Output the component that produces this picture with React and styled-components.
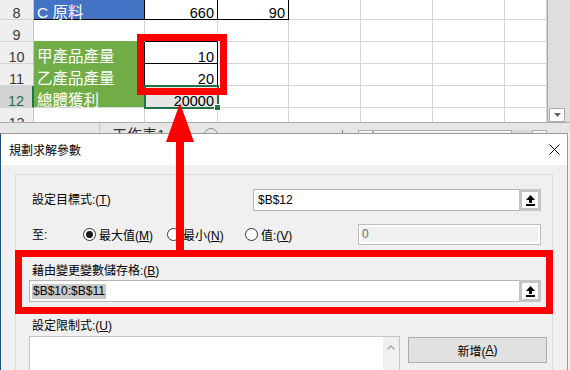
import React from "react";
import styled, { createGlobalStyle } from "styled-components";

const GlobalStyle = createGlobalStyle`
  html, body { margin: 0; padding: 0; }
  body {
    width: 570px;
    height: 370px;
    overflow: hidden;
    background: #f0f0f0;
    font-family: "Liberation Sans", "Noto Sans CJK TC", sans-serif;
  }
`;

const Page = styled.div`
  position: relative;
  width: 570px;
  height: 370px;
  overflow: hidden;
`;

/* ---------- spreadsheet behind the dialog ---------- */

const Sheet = styled.div`
  height: 133px;
  display: flex;
  flex-direction: column;
  background: #fff;
`;

const SheetMain = styled.div`
  display: flex;
  height: 122px;
`;

const Grid = styled.div`
  width: 547px;
  height: 122px;
  overflow: hidden;
  display: grid;
  grid-template-columns: 34px 111px 73px 71px 72px 72px 72px 42px;
  grid-template-rows: 20px repeat(5, 22px);
  font-size: 14.5px;
`;

const RowHead = styled.div`
  box-sizing: border-box;
  display: flex;
  align-items: flex-end;
  justify-content: center;
  line-height: 12px;
  background: ${(p) => (p.$active ? "#d2d2d2" : "#efefef")};
  color: ${(p) => (p.$active ? "#217346" : "#3a3a3a")};
  border-right: ${(p) => (p.$active ? "2px solid #217346" : "1px solid #c6c6c6")};
  border-bottom: 1px solid #d4d4d4;
`;

const Cell = styled.div`
  position: relative;
  box-sizing: border-box;
  display: flex;
  align-items: flex-end;
  justify-content: ${(p) => (p.$align === "right" ? "flex-end" : "flex-start")};
  padding: 0 3px;
  line-height: 12px;
  white-space: nowrap;
  font-size: ${(p) => (p.$big ? "15.5px" : "14.5px")};
  background: ${(p) => p.$bg || "#fff"};
  color: ${(p) => p.$color || "#000"};
  border-right: 1px solid ${(p) => p.$r || "#d4d4d4"};
  border-bottom: 1px solid ${(p) => p.$b || "#d4d4d4"};
`;

const SelCell = styled(Cell)`
  z-index: 1;
  &::after {
    content: "";
    position: absolute;
    left: -1px;
    top: -1px;
    right: -2px;
    bottom: -2px;
    border: 2px solid #217346;
  }
  &::before {
    content: "";
    position: absolute;
    right: -4px;
    bottom: -4px;
    width: 5px;
    height: 5px;
    background: #217346;
    border: 1px solid #fff;
    z-index: 2;
  }
`;

const VScroll = styled.div`
  flex: 1;
  display: flex;
  flex-direction: column;
  background: #dedede;
  border-left: 1px solid #ababab;
  padding-left: 1px;
`;

const DownBtn = styled.div`
  margin-top: auto;
  width: 16px;
  height: 14px;
  box-sizing: border-box;
  border: 1px solid #ababab;
  background: #fff;
  display: flex;
  align-items: center;
  justify-content: center;
`;

const TabStrip = styled.div`
  height: 11px;
  box-sizing: border-box;
  border-top: 1px solid #ababab;
  background: #e6e6e6;
  display: flex;
  align-items: flex-start;
  overflow: hidden;
`;

const TabNav = styled.div`
  width: 100px;
  height: 20px;
  box-sizing: border-box;
  border-right: 1px solid #c6c6c6;
`;

const SheetTab = styled.div`
  width: 104px;
  box-sizing: border-box;
  padding: 4px 0 0 12px;
  font-size: 15px;
  line-height: 15px;
  color: #333;
  white-space: nowrap;
`;

const AddSheet = styled.div`
  margin-top: 5px;
  width: 14px;
  height: 14px;
  box-sizing: border-box;
  border: 1px solid #8a8a8a;
  border-radius: 50%;
`;

const HScroll = styled.div`
  margin-left: auto;
  margin-right: 23px;
  margin-top: 7px;
  display: flex;
  align-items: flex-start;
`;

const HPart = styled.div`
  width: ${(p) => p.$w}px;
  height: 8px;
  box-sizing: border-box;
  background: ${(p) => p.$bg || "#f6f6f6"};
  border: ${(p) => (p.$flat ? "none" : "1px solid #ababab")};
`;

/* ---------- solver dialog ---------- */

const Dialog = styled.div`
  width: 568px;
  height: 237px;
  box-sizing: border-box;
  border-left: 1px solid #1f4e79;
  border-right: 1px solid #9a9a9a;
  border-top: 1px solid #9a9a9a;
  background: #f0f0f0;
  font-size: 12px;
  color: #000;
`;

const TitleBar = styled.div`
  height: 31px;
  background: #fff;
  display: flex;
  align-items: center;
  justify-content: space-between;
  padding: 0 7px 0 8px;
`;

const Body = styled.div`
  padding: 9px 13px 0 14px;
`;

const Group = styled.div`
  width: 538px;
  height: 210px;
  box-sizing: border-box;
  border: 1px solid #dcdcdc;
  padding: 14px 5px 0 13px;
`;

const Row = styled.div`
  display: flex;
  align-items: ${(p) => p.$items || "center"};
  margin-top: ${(p) => p.$mt || 0}px;
  height: ${(p) => (p.$h ? `${p.$h}px` : "auto")};
`;

const Label = styled.div`
  flex: 0 0 ${(p) => (p.$w ? `${p.$w}px` : "auto")};
  box-sizing: border-box;
  padding-left: 3px;
  line-height: 16px;
  white-space: nowrap;
`;

const Field = styled.div`
  flex: 1;
  height: 22px;
  box-sizing: border-box;
  border: 1px solid #b4b4b4;
  background: #fff;
  display: flex;
  align-items: center;
  margin-right: 6px;
`;

const FieldText = styled.div`
  flex: 1;
  padding-left: ${(p) => p.$indent}px;
  white-space: nowrap;
`;

const Highlight = styled.span`
  display: inline-block;
  background: #c8c8c8;
  line-height: 15px;
  padding: 0 1px;
`;

const RefButton = styled.div`
  width: 22px;
  height: 22px;
  margin: -1px -1px -1px 0;
  box-sizing: border-box;
  border: 3px solid #c4c4c4;
  background: #fbfbfb;
  display: flex;
  align-items: center;
  justify-content: center;
`;

const RadioOpt = styled.div`
  display: flex;
  align-items: center;
  gap: 3px;
  width: ${(p) => (p.$w ? `${p.$w}px` : "auto")};
  white-space: nowrap;
`;

const RadioDot = styled.span`
  width: 13px;
  height: 13px;
  box-sizing: border-box;
  border-radius: 50%;
  border: 1px solid #333;
  background: #fff;
  display: flex;
  align-items: center;
  justify-content: center;
  &::after {
    content: "";
    width: 7px;
    height: 7px;
    border-radius: 50%;
    background: ${(p) => (p.$on ? "#1a1a1a" : "transparent")};
  }
`;

const Disabled = styled.div`
  margin-left: auto;
  margin-right: 6px;
  width: 183px;
  height: 21px;
  box-sizing: border-box;
  border: 1px solid #bcbcbc;
  background: #fff;
  padding: 2px;
  display: flex;
`;

const DisabledInner = styled.div`
  flex: 1;
  background: #f0f0f0;
  color: #6d6d6d;
  padding-left: 1px;
  line-height: 15px;
`;

const ListBox = styled.div`
  width: 371px;
  height: 60px;
  box-sizing: border-box;
  border: 1px solid #c4c4c4;
  background: #fff;
  display: flex;
`;

const ListScroll = styled.div`
  margin-left: auto;
  width: 16px;
  background: #f0f0f0;
  display: flex;
  justify-content: center;
  padding-top: 8px;
  box-sizing: border-box;
`;

const AddButton = styled.div`
  width: 139px;
  height: 26px;
  margin: 1px 0 0 8px;
  box-sizing: border-box;
  border: 1px solid #adadad;
  background: #e1e1e1;
  display: flex;
  align-items: center;
  justify-content: center;
`;

/* ---------- annotation overlays ---------- */

const RedFrame = styled.div`
  position: absolute;
  left: ${(p) => p.$x}px;
  top: ${(p) => p.$y}px;
  width: ${(p) => p.$w}px;
  height: ${(p) => p.$h}px;
  box-sizing: border-box;
  border: 7px solid #ff0000;
  pointer-events: none;
  z-index: 5;
`;

const ArrowSvg = styled.svg`
  position: absolute;
  left: 166px;
  top: 103px;
  z-index: 5;
`;

const BLUE = "#4472c4";
const GREEN = "#70ad47";

const rows = [
  {
    n: 8,
    cells: [
      { t: "C 原料", bg: BLUE, color: "#fff", big: true, r: "#000", b: "#000" },
      { t: "660", align: "right", r: "#000", b: "#000" },
      { t: "90", align: "right", r: "#000", b: "#000" },
    ],
  },
  { n: 9, cells: [{ b: GREEN }, { b: "#000" }] },
  {
    n: 10,
    cells: [
      { t: "甲產品產量", bg: GREEN, color: "#fff", big: true, r: "#000", b: GREEN },
      { t: "10", align: "right", r: "#000", b: "#000" },
    ],
  },
  {
    n: 11,
    cells: [
      { t: "乙產品產量", bg: GREEN, color: "#fff", big: true, r: "#000", b: GREEN },
      { t: "20", align: "right", r: "#000", b: "#000" },
    ],
  },
  {
    n: 12,
    active: true,
    cells: [
      { t: "總體獲利", bg: GREEN, color: "#fff", big: true },
      { t: "20000", align: "right", bg: "#e6e6e6", sel: true },
    ],
  },
  { n: 13, cells: [] },
];

const COLS = 7;

function RefIcon() {
  return (
    <svg width="9" height="11" viewBox="0 0 9 11">
      <path d="M4.5 0 L0 5 H3 V8 H6 V5 H9 Z" fill="#000" />
      <rect x="0" y="9" width="9" height="2" fill="#000" />
    </svg>
  );
}

function Radio({ on, w, children }) {
  return (
    <RadioOpt $w={w}>
      <RadioDot $on={on} />
      <span>{children}</span>
    </RadioOpt>
  );
}

export default function App() {
  return (
    <Page>
      <GlobalStyle />
      <Sheet>
        <SheetMain>
          <Grid>
            {rows.map((row) => (
              <React.Fragment key={row.n}>
                <RowHead $active={row.active}>{row.n}</RowHead>
                {Array.from({ length: COLS }).map((_, i) => {
                  const c = row.cells[i] || {};
                  const C = c.sel ? SelCell : Cell;
                  return (
                    <C
                      key={i}
                      $bg={c.bg}
                      $color={c.color}
                      $align={c.align}
                      $big={c.big}
                      $r={c.r}
                      $b={c.b}
                    >
                      {c.t}
                    </C>
                  );
                })}
              </React.Fragment>
            ))}
          </Grid>
          <VScroll>
            <DownBtn>
              <svg width="7" height="4" viewBox="0 0 7 4">
                <path d="M0 0 H7 L3.5 4 Z" fill="#666" />
              </svg>
            </DownBtn>
          </VScroll>
        </SheetMain>
        <TabStrip>
          <TabNav />
          <SheetTab>工作表1</SheetTab>
          <AddSheet />
          <HScroll>
            <HPart $w={1} $bg="#777" $flat />
            <HPart $w={15} style={{ marginLeft: 15 }} />
            <HPart $w={139} />
            <HPart $w={20} $bg="#d6d6d6" $flat />
            <HPart $w={15} />
          </HScroll>
        </TabStrip>
      </Sheet>

      <Dialog>
        <TitleBar>
          <span>規劃求解參數</span>
          <svg width="11" height="11" viewBox="0 0 11 11">
            <path d="M0.5 0.5 L10.5 10.5 M10.5 0.5 L0.5 10.5" stroke="#000" strokeWidth="1" />
          </svg>
        </TitleBar>
        <Body>
          <Group>
            <Row $h={22}>
              <Label $w={224}>
                設定目標式:(<u>T</u>)
              </Label>
              <Field>
                <FieldText $indent={4}>$B$12</FieldText>
                <RefButton>
                  <RefIcon />
                </RefButton>
              </Field>
            </Row>

            <Row $h={21} $mt={13}>
              <Label $w={54}>至:</Label>
              <Radio on w={84}>
                最大值(<u>M</u>)
              </Radio>
              <Radio w={78}>
                最小(<u>N</u>)
              </Radio>
              <Radio>
                值:(<u>V</u>)
              </Radio>
              <Disabled>
                <DisabledInner>0</DisabledInner>
              </Disabled>
            </Row>

            <Row $mt={18}>
              <Label>
                藉由變更變數儲存格:(<u>B</u>)
              </Label>
            </Row>

            <Row $h={22} $mt={1}>
              <Field>
                <FieldText $indent={2}>
                  <Highlight>$B$10:$B$11</Highlight>
                </FieldText>
                <RefButton>
                  <RefIcon />
                </RefButton>
              </Field>
            </Row>

            <Row $mt={16}>
              <Label>
                設定限制式:(<u>U</u>)
              </Label>
            </Row>

            <Row $mt={2} $items="flex-start">
              <ListBox>
                <ListScroll>
                  <svg width="8" height="5" viewBox="0 0 8 5">
                    <path d="M0.5 4.5 L4 1 L7.5 4.5" stroke="#a6a6a6" strokeWidth="1.4" fill="none" />
                  </svg>
                </ListScroll>
              </ListBox>
              <AddButton>
                新增(<u>A</u>)
              </AddButton>
            </Row>
          </Group>
        </Body>
      </Dialog>

      <RedFrame $x={137} $y={34} $w={90} $h={61} />
      <RedFrame $x={15} $y={250} $w={538} $h={64} />
      <ArrowSvg width="28" height="154" viewBox="0 0 28 154">
        <path d="M14 0 L0 39 H28 Z" fill="#ff0000" />
        <rect x="10" y="38" width="8" height="116" fill="#ff0000" />
      </ArrowSvg>
    </Page>
  );
}
